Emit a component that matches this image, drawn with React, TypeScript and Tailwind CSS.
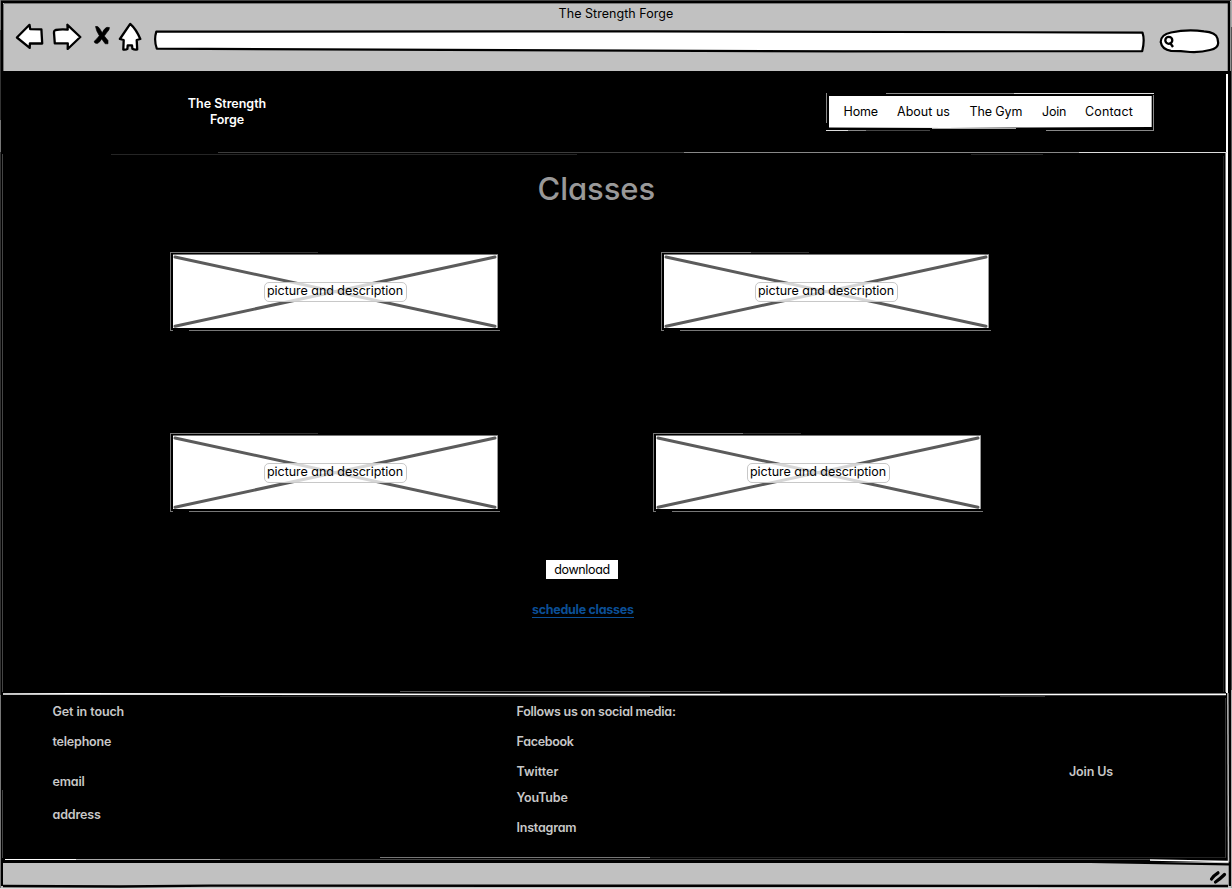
import type { ReactNode } from "react";

function Label({ children, className = "" }: { children: ReactNode; className?: string }) {
  return <span className={`block w-max whitespace-nowrap leading-4 ${className}`}>{children}</span>;
}

function BackIcon() {
  return (
    <svg width="29" height="28" viewBox="0 0 29 28" className="shrink-0" fill="#fff" stroke="#000" strokeWidth="2.300" strokeLinejoin="round">
      <path d="M14.5 2.8 1.9 15.500 14.700 25.900 14.900 21.400 27.200 21.500 26.700 13 26.4 7.3 15.2 7.1Z" />
    </svg>
  );
}

function ForwardIcon() {
  return (
    <svg width="30" height="28" viewBox="0 0 30 28" className="shrink-0" fill="#fff" stroke="#000" strokeWidth="2.300" strokeLinejoin="round">
      <path d="M15.4 2.8 15.7 7.6Q9 7 3.600 8Q1.6 8.500 2.100 12L2.8 21.400 15.8 21.400 15.700 27 28.3 15Z" />
    </svg>
  );
}

function StopIcon() {
  return (
    <svg width="18" height="22" viewBox="0 0 18 22" className="shrink-0" fill="#000" stroke="#000" strokeLinejoin="round">
      <path d="M2.500 1.500Q5 .8 6.600 3.500L9.200 7.800Q11.500 3 14 2.300L16.500 2.600Q16.500 5 14 7.300L11.300 11 15 15.500V18.800H12.200L8.700 13.900Q6.300 18 4.200 18.600Q1.200 18.500 1.200 16.300Q3.500 14.500 6.300 10.700Q3 5.500 2.500 1.500Z" strokeWidth=".6" />
    </svg>
  );
}

function HomeIcon() {
  return (
    <svg width="24" height="29" viewBox="0 0 24 29" className="shrink-0" fill="#fff" stroke="#000" strokeWidth="2.300" strokeLinejoin="round">
      <path d="M12.200 1.900 1.900 17 5.700 18 5.300 27.500Q8 28 9.400 26.800L9.700 23.300H14L14.400 26.800Q16.600 28 19.200 27.400L18.700 18 22.3 17Q18 7 12.200 1.900Z" />
    </svg>
  );
}

function AddressBar() {
  return (
    <svg width="993" height="24" viewBox="0 0 993 24" className="shrink-0" fill="#fff" stroke="#000" strokeWidth="2.200" strokeLinejoin="round">
      <path d="M3.300 2.7 500 2.300 989.500 3.6Q992 11 989.2 22.200L690 22.300 420 21.400 3.8 19.7Q.7 11 3.300 2.7Z" />
    </svg>
  );
}

function SearchBox() {
  return (
    <svg width="62" height="27" viewBox="0 0 62 27" className="shrink-0" fill="none" stroke="#000" strokeWidth="2.200">
      <path fill="#fff" d="M12 4.5Q28 1 45 3.300Q57 4 58.500 10.500L59.200 15Q59 20.500 51 22Q42 24.6 31 24Q22 22.800 12 22.800Q3 21.5 1.7 14Q1.8 6.500 12 4.5Z" />
      <circle cx="9.8" cy="12.300" r="3.500" strokeWidth="2.300" />
      <path d="M10.800 14.500 14 19" strokeWidth="2.300" />
    </svg>
  );
}

function PictureBox() {
  return (
    <div className="relative h-[79px] w-[330px]">
      <svg width="330" height="79" viewBox="0 0 330 79" fill="none">
        <path d="M.5 0V79" stroke="#777" />
        <path d="M0 .5H90" stroke="#777" />
        <path d="M90 .5H148" stroke="#333" />
        <path d="M0 78.5H3M19 78.5H330" stroke="#777" />
        <path d="M3 2.5H328" stroke="#777" />
        <path d="M3 3H327.600V76H3Z" fill="#fff" />
        <path d="M5 5 325 74.200M5 74.200 325 5" stroke="#5b5b5b" strokeWidth="3" strokeLinecap="round" />
      </svg>
      <div className="absolute left-[94px] top-[30px] h-5 w-[143px] rounded-[5px] border border-[#c8c8c8] bg-white/75 pl-0.5">
        <Label className="tracking-[-0.04px]">picture and description</Label>
      </div>
    </div>
  );
}

function SketchFrame() {
  return (
    <svg width="1232" height="889" viewBox="0 0 1232 889" fill="none" className="pointer-events-none absolute left-0 top-0">
      <path d="M0 .5H1232" stroke="#444" />
      <path d="M0 2H1230" stroke="#000" strokeWidth="2" />
      <path d="M4 3.500H1228" stroke="#777" />
      <path d="M.5 0V30M.5 120V152M.5 695V889" stroke="#777" />
      <path d="M.5 30V120M.5 152V695" stroke="#333" />
      <path d="M2 2V886" stroke="#000" strokeWidth="2" />
      <path d="M3.500 4V71" stroke="#777" />
      <path d="M1229 2V73L1230 886" stroke="#000" strokeWidth="2.500" />
      <path d="M1231.500 0V27M1231.500 690V889" stroke="#aaa" />
      <path d="M1231.500 27V690" stroke="#555" />
      <path d="M1227 74V693" stroke="#fff" strokeWidth="2" />
      <path d="M1227.800 693 1228.500 862" stroke="#bbb" strokeWidth="1.500" />

      <path d="M218 152.500H684" stroke="#3c3c3c" />
      <path d="M684 152.500H1079" stroke="#888" />
      <path d="M1079 152.500H1227" stroke="#ddd" />
      <path d="M111 154.500H577M971 154.500H1043" stroke="#252525" />
      <path d="M1225.500 153V692" stroke="#777" />
      <path d="M1223.500 156V692" stroke="#222" />
      <path d="M2.500 154V692M2.500 790V858" stroke="#444" />
      <path d="M400 691.500H720" stroke="#555" />
      <path d="M3 694 75 693.800 640 694.700 1226 694.400" stroke="#fff" strokeWidth="1.700" />
      <path d="M220 696.500H650M1000 696.500H1045" stroke="#333" />
      <path d="M1225.500 698V858" stroke="#333" />
      <path d="M380 857.500H650" stroke="#777" />
      <path d="M650 857.500H1225" stroke="#222" />
      <path d="M5 859.500H76" stroke="#fff" />
      <path d="M76 859.500H220" stroke="#aaa" />
      <path d="M220 859.500H1150" stroke="#444" />
      <path d="M1150 860 1228 861.500" stroke="#fff" strokeWidth="1.600" />
      <path d="M3 861.800 300 862 1090 861.800 1229 864.300" stroke="#000" strokeWidth="2.200" />
      <path d="M3 886 120 886.500 210 885.600 1228 886" stroke="#000" strokeWidth="2.400" />
      <path d="M0 888.500H1232" stroke="#ddd" />
    </svg>
  );
}

const nav = [
  { name: "Home", style: "w-[53.500px] tracking-[-0.15px]" },
  { name: "About us", style: "w-[72.500px] tracking-[0.02px]" },
  { name: "The Gym", style: "w-[72.500px] tracking-[-0.12px]" },
  { name: "Join", style: "w-[43px] tracking-[-0.2px]" },
  { name: "Contact", style: "w-[49px] tracking-[0.15px]" },
];

export default function App() {
  return (
    <div className="relative flex h-[889px] w-[1232px] flex-col overflow-hidden bg-black font-['Inter','Noto_Sans',sans-serif] text-[12.5px] text-black [font-feature-settings:'cv11']">
      <div className="h-[71px] shrink-0 bg-[#c1c1c1] pt-1.5">
        <Label className="mx-auto tracking-[0.04px]">The Strength Forge</Label>
        <div className="flex items-start pl-[15px]">
          <BackIcon />
          <div className="ml-2"><ForwardIcon /></div>
          <div className="ml-[11px] mt-[3px]"><StopIcon /></div>
          <div className="ml-[7px]"><HomeIcon /></div>
          <div className="ml-[11px] mt-[7px]"><AddressBar /></div>
          <div className="ml-[13px] mt-[6px]"><SearchBox /></div>
        </div>
      </div>

      <header className="flex h-[81px] shrink-0 items-start">
        <div className="ml-[187px] mt-[25px] flex w-20 flex-col items-center font-semibold text-white">
          <Label className="tracking-[-0.02px]">The Strength</Label>
          <Label className="tracking-[-0.1px]">Forge</Label>
        </div>
        <div className="relative ml-[559px] mt-[22px] h-[38px] w-[328px]">
          <svg width="328" height="38" viewBox="0 0 328 38" fill="none" className="absolute left-0 top-0">
            <path d="M.5 0V30M60 .5H328M327.500 2V38M0 37.500H40M220 37.500H328" stroke="#888" />
            <path d="M0 37.500H22M188 .5H328" stroke="#ddd" />
            <path d="M40 37.500H104" stroke="#444" />
            <path d="M3 3H325V34L200 34.500 120 35 3 34.500Z" fill="#fff" />
            <path d="M325.500 3V34M106 35.500H190" stroke="#aaa" />
          </svg>
          <nav className="relative flex pl-[17.500px] pt-[11px]">
            {nav.map((item) => (
              <a key={item.name} className={`block shrink-0 whitespace-nowrap leading-4 ${item.style}`}>{item.name}</a>
            ))}
          </nav>
        </div>
      </header>

      <main className="h-[542px] shrink-0">
        <h1 className="ml-[537.500px] mt-[17px] w-max text-[31px] font-medium leading-10 tracking-[-0.05px] text-[#999]">Classes</h1>
        <div className="ml-[170px] mt-[43px] flex gap-[161px]">
          <PictureBox />
          <PictureBox />
        </div>
        <div className="ml-[170px] mt-[102px] flex gap-[153px]">
          <PictureBox />
          <PictureBox />
        </div>
        <button className="ml-[546px] mt-12 flex h-[19px] w-[72px] justify-center bg-white pt-0.5">
          <Label className="tracking-[-0.33px]">download</Label>
        </button>
        <a className="ml-[532px] mt-[23px] block h-[16px] w-[102px] border-b border-[#0b4f96] font-bold text-[#0b4f96]">
          <Label className="tracking-[-0.28px]">schedule classes</Label>
        </a>
      </main>

      <footer className="flex h-[168px] shrink-0 pt-2.5 font-semibold text-[#c8c8c8]">
        <div className="ml-[52.500px] w-[464px]">
          <Label className="tracking-[-0.1px]">Get in touch</Label>
          <Label className="mt-3.5 tracking-[-0.2px]">telephone</Label>
          <Label className="mt-6 tracking-[-0.15px]">email</Label>
          <Label className="mt-[17px] tracking-[-0.15px]">address</Label>
        </div>
        <div className="w-[552.500px]">
          <Label className="tracking-[-0.25px]">Follows us on social media:</Label>
          <Label className="mt-3.5 tracking-[-0.3px]">Facebook</Label>
          <Label className="mt-3.5 tracking-[0px]">Twitter</Label>
          <Label className="mt-2.5 tracking-[-0.2px]">YouTube</Label>
          <Label className="mt-3.5 tracking-[-0.2px]">Instagram</Label>
        </div>
        <Label className="mt-[60px] tracking-[-0.15px]">Join Us</Label>
      </footer>

      <div className="flex flex-1 justify-end bg-[#c1c1c1]">
        <svg width="18" height="16" viewBox="0 0 18 16" className="mr-[5px] mt-2 shrink-0" stroke="#000" strokeWidth="3.200" strokeLinecap="round">
          <path d="M2.500 9Q4 6 9 2.800M6.500 12Q11 9 15.500 4.500" fill="none" />
        </svg>
      </div>
      <SketchFrame />
    </div>
  );
}
